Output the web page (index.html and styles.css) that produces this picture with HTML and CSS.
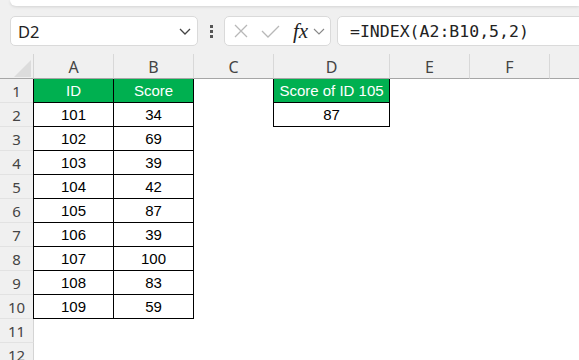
FILE: index.html
```html
<!DOCTYPE html>
<html lang="en">
<head>
    <meta charset="UTF-8">
    <title>INDEX</title>
    <link rel="stylesheet" href="styles.css">
</head>
<body>
<div class="ribbon"></div>

<div class="fbar">
    <div class="namebox">
        <span>D2</span>
        <svg class="chev" width="12" height="7" viewBox="0 0 12 7"><path d="M1 1 L6 6 L11 1" fill="none" stroke="#444" stroke-width="1.3"/></svg>
    </div>
    <div class="grip"><i></i><i></i><i></i></div>
    <div class="tools">
        <svg width="14" height="14" viewBox="0 0 14 14"><path d="M1 1 L13 13 M13 1 L1 13" stroke="#b8b8b8" stroke-width="1.3" fill="none"/></svg>
        <svg width="19" height="13" viewBox="0 0 19 13"><path d="M1 6 L7 12 L18 1" stroke="#b8b8b8" stroke-width="1.3" fill="none"/></svg>
        <span class="fx">fx</span>
        <svg width="12" height="7" viewBox="0 0 12 7"><path d="M1 1 L6 6 L11 1" fill="none" stroke="#888" stroke-width="1.1"/></svg>
    </div>
    <div class="formula">=INDEX(A2:B10,5,2)</div>
</div>

<div class="sheet">
    <div class="corner"><svg width="17" height="17" viewBox="0 0 17 17"><path d="M17 0 L17 17 L0 17 Z" fill="#dcdcdc"/></svg></div>
    <div class="ch">A</div><div class="ch">B</div><div class="ch">C</div><div class="ch">D</div><div class="ch">E</div><div class="ch">F</div><div class="ch last"></div>

    <div class="rh">1</div><div class="t hd first">ID</div><div class="t hd">Score</div><div></div><div class="t hd first top">Score of ID 105</div><div></div><div></div><div></div>
    <div class="rh">2</div><div class="t first">101</div><div class="t">34</div><div></div><div class="t first">87</div><div></div><div></div><div></div>
    <div class="rh">3</div><div class="t first">102</div><div class="t">69</div><div></div><div></div><div></div><div></div><div></div>
    <div class="rh">4</div><div class="t first">103</div><div class="t">39</div><div></div><div></div><div></div><div></div><div></div>
    <div class="rh">5</div><div class="t first">104</div><div class="t">42</div><div></div><div></div><div></div><div></div><div></div>
    <div class="rh">6</div><div class="t first">105</div><div class="t">87</div><div></div><div></div><div></div><div></div><div></div>
    <div class="rh">7</div><div class="t first">106</div><div class="t">39</div><div></div><div></div><div></div><div></div><div></div>
    <div class="rh">8</div><div class="t first">107</div><div class="t">100</div><div></div><div></div><div></div><div></div><div></div>
    <div class="rh">9</div><div class="t first">108</div><div class="t">83</div><div></div><div></div><div></div><div></div><div></div>
    <div class="rh">10</div><div class="t first">109</div><div class="t">59</div><div></div><div></div><div></div><div></div><div></div>
    <div class="rh">11</div><div></div><div></div><div></div><div></div><div></div><div></div><div></div>
    <div class="rh">12</div><div></div><div></div><div></div><div></div><div></div><div></div><div></div>
</div>
</body>
</html>
```

FILE: styles.css
```css
*{
    padding: 0;
    margin: 0;
    box-sizing: border-box;
}
html,body{
    height: 100%;
    overflow: hidden;
}
body{
    background-color: #f0f0f0;
    font-family: "Noto Sans", "Liberation Sans", sans-serif;
}
.ribbon{
    height: 6px;
    margin-left: 10px;
    background-color: #fff;
    border-radius: 0 0 0 8px;
    box-shadow: 0 1px 3px rgba(0,0,0,.12);
}
.fbar{
    display: flex;
    align-items: center;
    height: 30px;
    margin: 10px 0 8px 10px;
}
.namebox{
    width: 188px;
    height: 30px;
    display: flex;
    align-items: center;
    justify-content: space-between;
    padding: 0 6px 0 7px;
    background-color: #fff;
    border: 1px solid #dadada;
    border-radius: 5px;
    font-size: 16.5px;
    color: #222;
}
.grip{
    width: 26px;
    display: flex;
    flex-direction: column;
    align-items: center;
    gap: 2px;
}
.grip i{
    width: 3px;
    height: 3px;
    background-color: #555;
}
.tools{
    width: 107px;
    height: 30px;
    display: flex;
    align-items: center;
    padding-left: 9px;
    background-color: #fff;
    border: 1px solid #dadada;
    border-radius: 5px;
}
.tools svg:nth-child(2){
    margin-left: 13px;
}
.fx{
    margin-left: 13px;
    font: italic 21px/1 "Liberation Serif", serif;
    color: #222;
}
.tools svg:last-child{
    margin-left: 5px;
}
.formula{
    flex: 1;
    height: 30px;
    margin-left: 6px;
    margin-right: -10px;
    padding-left: 12px;
    display: flex;
    align-items: center;
    background-color: #fff;
    border: 1px solid #dadada;
    border-radius: 5px;
    font: 16.5px "DejaVu Sans Mono", monospace;
    color: #222;
}
.sheet{
    display: grid;
    grid-template-columns: 34px 80px 80px 80px 116px 80px 80px 1fr;
    grid-template-rows: 25px;
    grid-auto-rows: 24px;
    background-color: #fff;
    font: 15px "Liberation Sans", Arial, sans-serif;
    color: #000;
}
.sheet>div{
    display: flex;
    align-items: center;
    justify-content: center;
}
.corner{
    background-color: #f0f0f0;
    border-right: 1px solid #d4d4d4;
    border-bottom: 1px solid #a6a6a6;
    padding: 6px 2px 1px 0;
}
.sheet>.corner{
    align-items: flex-end;
    justify-content: flex-end;
}
.ch{
    background-color: #f0f0f0;
    border-right: 1px solid #d8d8d8;
    border-bottom: 1px solid #a6a6a6;
    font: 16px "Noto Sans", sans-serif;
    color: #444;
    padding-top: 1px;
}
.ch.last{
    border-right: none;
}
.rh{
    background-color: #f0f0f0;
    border-right: 1px solid #d4d4d4;
    border-bottom: 1px solid #e2e2e2;
    font: 15px "Noto Sans", sans-serif;
    color: #444;
}
.t{
    border-right: 1px solid #000;
    border-bottom: 1px solid #000;
}
.t.first{
    box-shadow: -1px 0 0 #000;
}
.t.hd{
    background-color: #00b050;
    color: #fff;
}
```
